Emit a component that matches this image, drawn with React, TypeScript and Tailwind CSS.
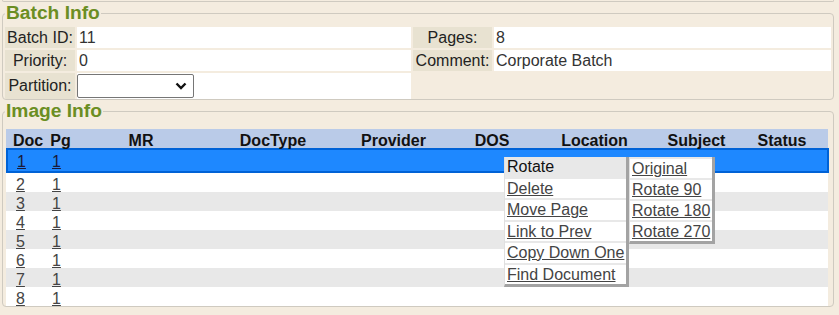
import React from "react";

const font = { fontFamily: '"Liberation Sans", Arial, sans-serif' };

const cols = "grid grid-cols-[44px_21px_140px_124px_117px_80px_125px_79px_92px]";

const headers = ["Doc", "Pg", "MR", "DocType", "Provider", "DOS", "Location", "Subject", "Status"];

function Row({ doc, bg }: { doc: number; bg: string }) {
  return (
    <div className={`${cols} h-[19px] items-center ${bg}`}>
      <div className="pl-[10px]">
        <a className="underline text-[#444]">{doc}</a>
      </div>
      <div className="pl-[2px]">
        <a className="underline text-[#444]">1</a>
      </div>
    </div>
  );
}

export default function App() {
  const rows = [2, 3, 4, 5, 6, 7, 8];
  return (
    <div
      className="relative w-[839px] h-[315px] bg-[#f4ecdf] text-[16px] text-[#222] overflow-hidden"
      style={font}
    >
      {/* previous fieldset bottom */}
      <div className="ml-[2px] w-[832px] h-[2px] border-x border-b border-[#cfcac0] rounded-b-[4px]" />

      {/* Batch Info */}
      <fieldset className="ml-[2px] w-[832px] border border-[#cfcac0] rounded-[4px] px-[2px] pb-0">
        <legend className="px-[1px] text-[19.2px] font-bold text-[#6b8e23] leading-[22px]">Batch Info</legend>
        <div className="mt-[3px] grid grid-cols-[70px_334px_79px_1fr] gap-[2px] leading-[21px]">
          <div className="bg-[#e8e2d1] text-center h-[21px]">Batch ID:</div>
          <div className="bg-white pl-[2px] text-[#333] h-[21px]">11</div>
          <div className="bg-[#e8e2d1] text-center h-[21px]">Pages:</div>
          <div className="bg-white pl-[2px] text-[#333] h-[21px]">8</div>

          <div className="bg-[#e8e2d1] text-center h-[21px]">Priority:</div>
          <div className="bg-white pl-[2px] text-[#333] h-[21px]">0</div>
          <div className="bg-[#e8e2d1] text-center h-[21px]">Comment:</div>
          <div className="bg-white pl-[2px] text-[#333] h-[21px]">Corporate Batch</div>

          <div className="bg-[#e8e2d1] text-center h-[26px] leading-[26px]">Partition:</div>
          <div className="bg-white h-[26px] flex items-center">
            <div className="w-[117px] h-[24px] border border-[#767676] rounded-[2px] bg-white flex items-center justify-end pr-[6px]">
              <svg width="12" height="8" viewBox="0 0 12 8">
                <polyline points="1.5,1.5 6,6 10.5,1.5" fill="none" stroke="#111" strokeWidth="2.4" />
              </svg>
            </div>
          </div>
          <div className="h-[26px]" />
          <div className="h-[26px]" />
        </div>
      </fieldset>

      {/* Image Info */}
      <fieldset className="ml-[2px] w-[832px] border border-[#cfcac0] rounded-[4px] px-[2px] pb-0">
        <legend className="px-[1px] text-[19.2px] font-bold text-[#6b8e23] leading-[22px]">Image Info</legend>
        <div className="mt-[7px] ml-[1px] w-[822px]">
          <div className={`${cols} h-[19px] items-center bg-[#bacbe8] font-bold text-[#111] text-center`}>
            {headers.map((h) => (
              <div key={h}>{h}</div>
            ))}
          </div>
          <div className={`${cols} h-[25px] items-center bg-[#1e88ff] border-2 border-[#0062d6] w-[823px]`}>
            <div className="pl-[9px]">
              <a className="underline text-[#1a1a3a]">1</a>
            </div>
            <div className="pl-[0px]">
              <a className="underline text-[#1a1a3a]">1</a>
            </div>
          </div>
          {rows.map((r, i) => (
            <Row key={r} doc={r} bg={i % 2 === 0 ? "bg-white" : "bg-[#e8e8e8]"} />
          ))}
        </div>
      </fieldset>

      {/* Context menu */}
      <div className="absolute left-[504px] top-[157px] flex items-start">
        <div className="bg-[#e8e8e8] border-l border-[#e0e0e0] border-r-[3px] border-r-[#a3a3a3] border-b-[3px] border-b-[#a3a3a3] flex flex-col gap-[2px] w-[125px]">
          <div className="h-[19.5px] leading-[19.5px] px-[2px] bg-[#e8e8e8] text-[#111]">Rotate</div>
          {["Delete", "Move Page", "Link to Prev", "Copy Down One", "Find Document"].map((t) => (
            <div key={t} className="h-[19.5px] leading-[19.5px] px-[2px] bg-white">
              <a className="underline text-[#444] whitespace-nowrap">{t}</a>
            </div>
          ))}
        </div>
        <div className="bg-[#e8e8e8] border-l border-[#e0e0e0] border-r-[3px] border-r-[#a3a3a3] border-b-[3px] border-b-[#a3a3a3] pt-[2px] flex flex-col gap-[2px] w-[86px]">
          {["Original", "Rotate 90", "Rotate 180", "Rotate 270"].map((t) => (
            <div key={t} className="h-[19px] leading-[19px] px-[2px] bg-white">
              <a className="underline text-[#444] whitespace-nowrap">{t}</a>
            </div>
          ))}
        </div>
      </div>
    </div>
  );
}
